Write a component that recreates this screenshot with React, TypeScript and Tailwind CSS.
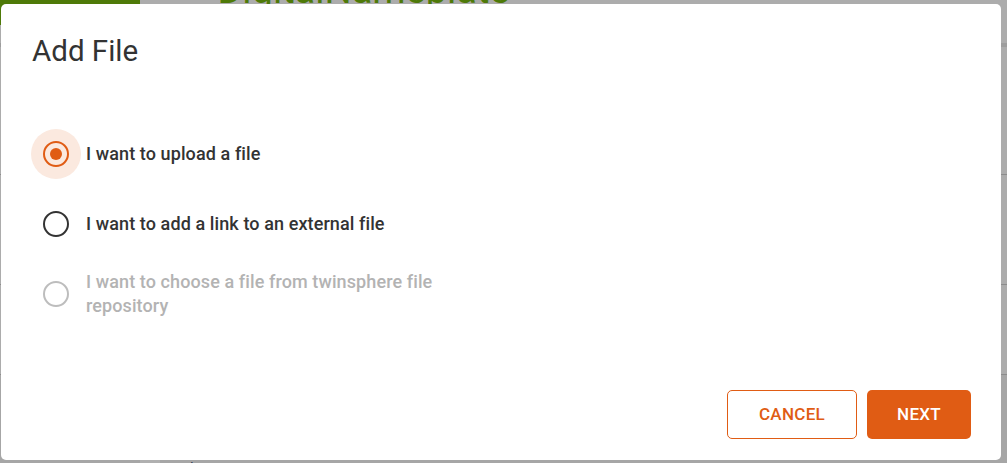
import React from "react";

function Radio({ state }: { state: "checked" | "unchecked" | "disabled" }) {
  if (state === "checked") {
    return (
      <div className="w-[50px] h-[50px] rounded-full bg-[#fbe9df] flex items-center justify-center shrink-0">
        <div className="w-[26px] h-[26px] rounded-full border-2 border-[#e05c14] flex items-center justify-center">
          <div className="w-[12px] h-[12px] rounded-full bg-[#e05c14]" />
        </div>
      </div>
    );
  }
  return (
    <div className="w-[50px] h-[50px] rounded-full flex items-center justify-center shrink-0">
      <div
        className={
          state === "disabled"
            ? "w-[26px] h-[26px] rounded-full border-2 border-[#bdbdbd]"
            : "w-[26px] h-[26px] rounded-full border-2 border-[#333333]"
        }
      />
    </div>
  );
}

export default function App() {
  return (
    <div className="relative w-[1007px] h-[463px] overflow-hidden bg-[#acacac] font-[Roboto,sans-serif]">
      {/* page behind the backdrop */}
      <div className="flex flex-col h-full">
        <div className="flex h-[43px] items-start">
          <div className="w-[140px] h-[25px] bg-[#4e7a08]" />
          <div className="flex items-start ml-[38px] mt-[-29px] text-[#4e7a08]">
            <span className="text-[38px] leading-[38px]">›</span>
            <span className="ml-[28px] text-[38px] leading-[38px]">DigitalNameplate</span>
          </div>
        </div>
        <div className="h-[4px] bg-[#9d9d9d]" />
        <div className="h-[128px] border-b border-[#8c8c8c]" />
        <div className="h-[110px] border-b border-[#8c8c8c]" />
        <div className="h-[90px] border-b border-[#8c8c8c]" />
        <div className="flex-1 bg-[#a6a6a6] flex items-end">
          <div className="w-[140px] h-[3px] bg-[#a6a6a6]" />
          <div className="w-[20px] h-[3px] bg-[#b0b0b0]" />
          <span className="ml-[22px] text-[14px] leading-[14px] mb-[-11px] text-[#2a3550]">nt</span>
        </div>
      </div>

      {/* dialog */}
      <div className="absolute left-[1px] top-[4px] w-[1000px] h-[456px] bg-white rounded-[5px] flex flex-col">
        <h2 className="pt-[26px] pl-[31px] text-[29.5px] leading-[42px] font-normal text-[#333333]">Add File</h2>

        <div className="mt-[57px] pl-[30px] flex flex-col gap-[20px]">
          <div className="flex items-center h-[50px]">
            <Radio state="checked" />
            <span className="ml-[5px] text-[18px] leading-[24px] font-medium text-[#333333] tracking-[0.1px]">I want to upload a file</span>
          </div>
          <div className="flex items-center h-[50px]">
            <Radio state="unchecked" />
            <span className="ml-[5px] text-[18px] leading-[24px] font-medium text-[#333333] tracking-[0.1px]">
              I want to add a link to an external file
            </span>
          </div>
          <div className="flex items-center h-[50px]">
            <Radio state="disabled" />
            <span className="ml-[5px] w-[370px] text-[18px] leading-[24px] font-medium text-[#b3b3b3] tracking-[0.1px]">
              I want to choose a file from twinsphere file repository
            </span>
          </div>
        </div>

        <div className="mt-auto flex justify-end gap-[10px] pr-[30px] pb-[21px]">
          <button className="w-[130px] h-[49px] rounded-[5px] border border-[#e05c14] bg-white text-[#e05c14] text-[17px] font-medium tracking-[0.3px]">
            CANCEL
          </button>
          <button className="w-[104px] h-[49px] rounded-[5px] bg-[#e05c14] text-white text-[17px] font-medium tracking-[0.3px]">
            NEXT
          </button>
        </div>
      </div>
    </div>
  );
}
